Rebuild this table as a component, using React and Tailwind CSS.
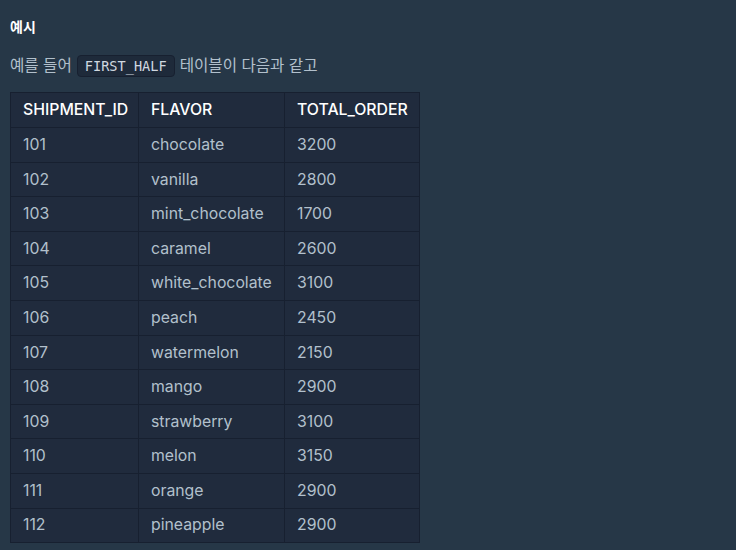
import React from 'react';

const rows = [
  ['101', 'chocolate', '3200'],
  ['102', 'vanilla', '2800'],
  ['103', 'mint_chocolate', '1700'],
  ['104', 'caramel', '2600'],
  ['105', 'white_chocolate', '3100'],
  ['106', 'peach', '2450'],
  ['107', 'watermelon', '2150'],
  ['108', 'mango', '2900'],
  ['109', 'strawberry', '3100'],
  ['110', 'melon', '3150'],
  ['111', 'orange', '2900'],
  ['112', 'pineapple', '2900'],
];

const font = { fontFamily: 'Inter, "Noto Sans CJK KR", sans-serif' };

export default function App() {
  return (
    <div className="w-[736px] h-[550px] bg-[#263747] overflow-hidden px-[10px] pt-[16px]" style={font}>
      <h5 className="text-[14px] font-bold text-white leading-[22px]">예시</h5>
      <p className="mt-[17px] text-[15.6px] text-[#b2c0cc] leading-[22px] flex items-center">
        예를 들어
        <code className="mx-[5px] px-[7px] h-[22px] flex items-center rounded-[4px] bg-[#1e2a3a] border border-[#172030] text-[13.6px] text-[#d0d8e0] font-['DejaVu_Sans_Mono',monospace]">
          FIRST_HALF
        </code>
        테이블이 다음과 같고
      </p>
      <table className="mt-[15px] border-collapse bg-[#202b3d] border border-[#172030] text-[15.8px]">
        <thead>
          <tr className="h-[35px]">
            <th className="w-[128px] pl-[12px] text-left font-medium text-white border border-[#172030]">SHIPMENT_ID</th>
            <th className="w-[146px] pl-[12px] text-left font-medium text-white border border-[#172030]">FLAVOR</th>
            <th className="w-[135px] pl-[12px] text-left font-medium text-white border border-[#172030]">TOTAL_ORDER</th>
          </tr>
        </thead>
        <tbody>
          {rows.map((r) => (
            <tr key={r[0]} className="h-[34.6px]">
              {r.map((c, i) => (
                <td key={i} className="pl-[12px] text-[#b2c0cc] border border-[#172030]">{c}</td>
              ))}
            </tr>
          ))}
        </tbody>
      </table>
    </div>
  );
}
